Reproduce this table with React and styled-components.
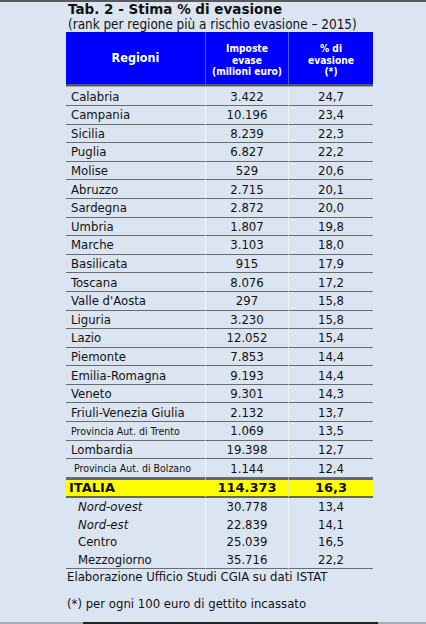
import React from 'react';
import styled, { createGlobalStyle } from 'styled-components';

const GlobalStyle = createGlobalStyle`
  html, body {
    margin: 0;
    padding: 0;
    background: #dbe5f1;
  }
`;

const rows = [
  { name: 'Calabria', tax: '3.422', pct: '24,7' },
  { name: 'Campania', tax: '10.196', pct: '23,4' },
  { name: 'Sicilia', tax: '8.239', pct: '22,3' },
  { name: 'Puglia', tax: '6.827', pct: '22,2' },
  { name: 'Molise', tax: '529', pct: '20,6' },
  { name: 'Abruzzo', tax: '2.715', pct: '20,1' },
  { name: 'Sardegna', tax: '2.872', pct: '20,0' },
  { name: 'Umbria', tax: '1.807', pct: '19,8' },
  { name: 'Marche', tax: '3.103', pct: '18,0' },
  { name: 'Basilicata', tax: '915', pct: '17,9' },
  { name: 'Toscana', tax: '8.076', pct: '17,2' },
  { name: "Valle d'Aosta", tax: '297', pct: '15,8' },
  { name: 'Liguria', tax: '3.230', pct: '15,8' },
  { name: 'Lazio', tax: '12.052', pct: '15,4' },
  { name: 'Piemonte', tax: '7.853', pct: '14,4' },
  { name: 'Emilia-Romagna', tax: '9.193', pct: '14,4' },
  { name: 'Veneto', tax: '9.301', pct: '14,3' },
  { name: 'Friuli-Venezia Giulia', tax: '2.132', pct: '13,7' },
  { name: 'Provincia Aut. di Trento', tax: '1.069', pct: '13,5', small: true },
  { name: 'Lombardia', tax: '19.398', pct: '12,7' },
  { name: 'Provincia Aut. di Bolzano', tax: '1.144', pct: '12,4', small: true, indent: 3 },
];

const areas = [
  { name: 'Nord-ovest', tax: '30.778', pct: '13,4', italic: true },
  { name: 'Nord-est', tax: '22.839', pct: '14,1', italic: true },
  { name: 'Centro', tax: '25.039', pct: '16,5' },
  { name: 'Mezzogiorno', tax: '35.716', pct: '22,2' },
];

const Frame = styled.div`
  min-height: 624px;
  box-sizing: border-box;
  border-top: 2px solid #5a5a5a;
  display: flex;
  flex-direction: column;
  font-family: 'DejaVu Sans Condensed', 'DejaVu Sans', sans-serif;
  color: #111;
`;

const Content = styled.div`
  flex: 1;
  padding: 0 0 0 66px;
`;

const Title = styled.div`
  font-family: 'DejaVu Sans', sans-serif;
  font-weight: bold;
  font-size: 13.5px;
  line-height: 15px;
  padding-left: 2px;
`;

const Subtitle = styled.div`
  font-size: 13.4px;
  line-height: 15px;
  padding-left: 2px;
`;

const Table = styled.div`
  width: 307px;
  display: grid;
  grid-template-columns: 139px 83px 85px;
`;

const Head = styled.div`
  height: ${({ $big }) => ($big ? '52px' : '47px')};
  padding-top: ${({ $big }) => ($big ? '0' : '5px')};
  background: #0000ff;
  color: #fff;
  font-weight: bold;
  font-size: ${({ $big }) => ($big ? '12.5px' : '10.2px')};
  line-height: 11.7px;
  display: flex;
  align-items: center;
  justify-content: center;
  text-align: center;
  border-left: ${({ $first }) => ($first ? 'none' : '1px solid #4a5cf0')};
  border-bottom: 2px solid #555;
  box-shadow: 0 1px 0 #9aa4b0;
  margin-bottom: 1.4px;
`;

const Cell = styled.div`
  height: 17.6px;
  display: flex;
  align-items: center;
  justify-content: ${({ $left }) => ($left ? 'flex-start' : 'center')};
  padding-left: ${({ $left, $indent }) => ($left ? `${5 + ($indent || 0)}px` : '0')};
  font-size: ${({ $small }) => ($small ? '10.5px' : '13px')};
  font-style: ${({ $italic }) => ($italic ? 'italic' : 'normal')};
  border-bottom: ${({ $line }) => ($line ? '1px solid #6b6b6b' : 'none')};
  border-left: ${({ $left }) => ($left ? 'none' : '1px solid #eef2f8')};
  white-space: nowrap;
`;

const Total = styled.div`
  height: 16px;
  background: #ffff00;
  display: flex;
  align-items: center;
  justify-content: ${({ $left }) => ($left ? 'flex-start' : 'center')};
  padding-left: ${({ $left }) => ($left ? '3px' : '0')};
  font-family: 'DejaVu Sans', sans-serif;
  font-weight: bold;
  font-size: 13px;
  border-top: 2px solid #666;
  border-bottom: 2px solid #666;
  border-left: ${({ $left }) => ($left ? 'none' : '1px solid #e8e8a0')};
`;

const Note = styled.div`
  font-size: 13px;
  line-height: 15px;
  padding-left: 1px;
  margin-top: ${({ $gap }) => $gap || '0'};
`;

const Bottom = styled.div`
  height: 2px;
  display: flex;
`;

const BottomPart = styled.div`
  width: ${({ $w }) => $w};
  flex: ${({ $grow }) => ($grow ? 1 : 'none')};
  background: ${({ $c }) => $c};
`;

export default function App() {
  return (
    <>
      <GlobalStyle />
      <Frame>
        <Content>
          <Title>Tab. 2 - Stima % di evasione</Title>
          <Subtitle>(rank per regione più a rischio evasione – 2015)</Subtitle>
          <Table>
            <Head $first $big>Regioni</Head>
            <Head>Imposte<br />evase<br />(milioni euro)</Head>
            <Head>% di<br />evasione<br />(*)</Head>
            {rows.map((r) => (
              <React.Fragment key={r.name}>
                <Cell $left $line $small={r.small} $indent={r.indent}>{r.name}</Cell>
                <Cell $line>{r.tax}</Cell>
                <Cell $line>{r.pct}</Cell>
              </React.Fragment>
            ))}
            <Total $left>ITALIA</Total>
            <Total>114.373</Total>
            <Total>16,3</Total>
            {areas.map((r, i) => (
              <React.Fragment key={r.name}>
                <Cell $left $indent={7} $italic={r.italic} $line={i === areas.length - 1}>{r.name}</Cell>
                <Cell $line={i === areas.length - 1}>{r.tax}</Cell>
                <Cell $line={i === areas.length - 1}>{r.pct}</Cell>
              </React.Fragment>
            ))}
          </Table>
          <Note>Elaborazione Ufficio Studi CGIA su dati ISTAT</Note>
          <Note $gap="12px">(*) per ogni 100 euro di gettito incassato</Note>
        </Content>
        <Bottom>
          <BottomPart $w="83px" $c="#a8acb0" />
          <BottomPart $w="295px" $c="#222" />
          <BottomPart $grow $c="#a8acb0" />
        </Bottom>
      </Frame>
    </>
  );
}
